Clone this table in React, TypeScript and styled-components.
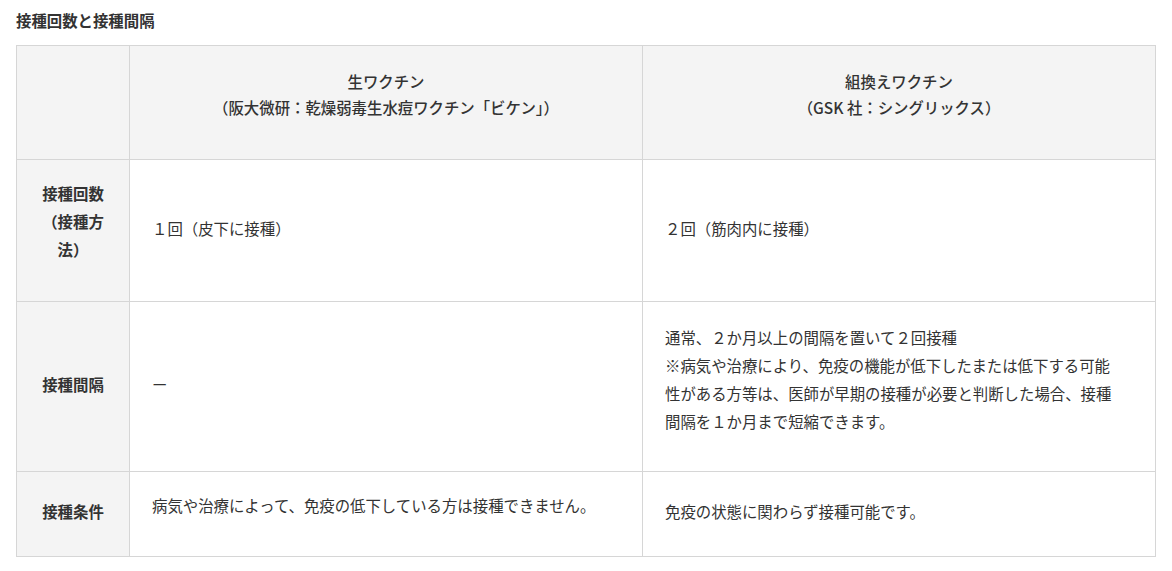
import styled, { createGlobalStyle } from "styled-components";

const GlobalStyle = createGlobalStyle`
  body {
    margin: 0;
    background: #fff;
    color: #333;
    font-family: "Noto Sans CJK JP", "Noto Sans", sans-serif;
  }
`;

const Page = styled.div`
  padding: 8px 16px;
`;
const Title = styled.h3`
  margin: 0 0 13px;
  font-size: 15.4px;
  line-height: 24px;
  font-weight: 700;
`;
const Table = styled.div`
  display: grid;
  grid-template-columns: 113px 513px 1fr;
  grid-template-rows: 114px 142px 170px 85px;
  border-top: 1px solid #d6d6d6;
  border-left: 1px solid #d6d6d6;
  font-size: 15.4px;
`;
const Cell = styled.div<{ $head?: boolean; $lift?: number }>`
  display: flex;
  flex-direction: column;
  justify-content: center;
  border-right: 1px solid #d6d6d6;
  border-bottom: 1px solid #d6d6d6;
  background: ${(p) => (p.$head ? "#f4f4f4" : "#fff")};
  padding: 0 22px ${(p) => p.$lift ?? 6}px;
  line-height: 28px;
`;
const HeadCell = styled(Cell)`
  align-items: center;
  text-align: center;
  font-weight: 500;
  line-height: 26px;
  padding-bottom: 18px;
`;
const Label = styled(Cell)`
  align-items: center;
  text-align: center;
  font-weight: 700;
  padding-left: 12px;
  padding-right: 12px;
`;

const App = () => {
  return (
    <>
      <GlobalStyle />
      <Page>
        <Title>接種回数と接種間隔</Title>
        <Table>
          <Cell $head />
          <HeadCell $head>
            生ワクチン
            <br />
            （阪大微研：乾燥弱毒生水痘ワクチン「ビケン」）
          </HeadCell>
          <HeadCell $head>
            組換えワクチン
            <br />
            （GSK 社：シングリックス）
          </HeadCell>

          <Label $head $lift={20}>
            接種回数
            <br />
            （接種方
            <br />
            法）
          </Label>
          <Cell>１回（皮下に接種）</Cell>
          <Cell>２回（筋肉内に接種）</Cell>

          <Label $head>接種間隔</Label>
          <Cell>ー</Cell>
          <Cell $lift={16}>
            通常、２か月以上の間隔を置いて２回接種
            <br />
            ※病気や治療により、免疫の機能が低下したまたは低下する可能
            <br />
            性がある方等は、医師が早期の接種が必要と判断した場合、接種
            <br />
            間隔を１か月まで短縮できます。
          </Cell>

          <Label $head>接種条件</Label>
          <Cell $lift={18}>病気や治療によって、免疫の低下している方は接種できません。</Cell>
          <Cell>免疫の状態に関わらず接種可能です。</Cell>
        </Table>
      </Page>
    </>
  );
};

export default App;
